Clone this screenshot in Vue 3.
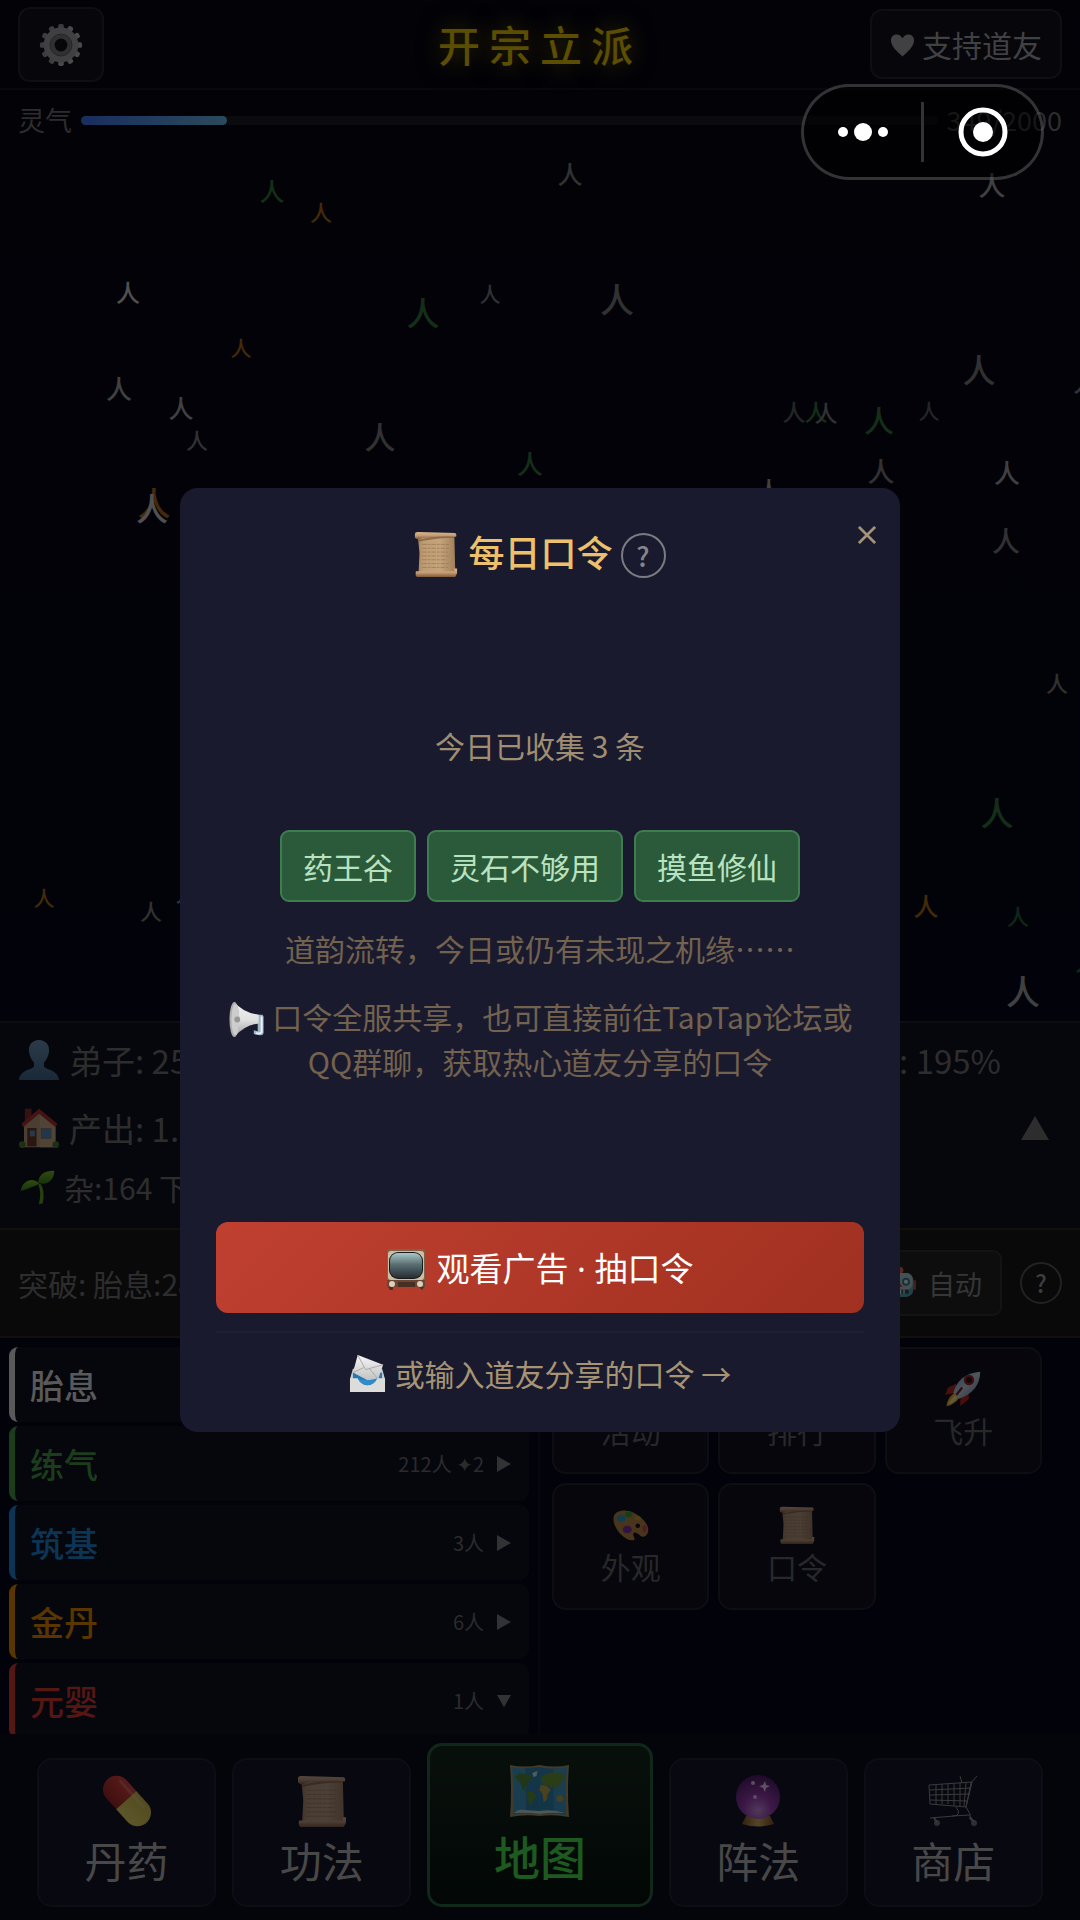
<script setup>
const people = [
  { x: 272, y: 180, s: 25, c: 'green' },
  { x: 321, y: 201, s: 22, c: 'orange' },
  { x: 128, y: 281, s: 24, c: 'white' },
  { x: 490, y: 284, s: 21, c: 'grey' },
  { x: 423, y: 298, s: 33, c: 'green' },
  { x: 241, y: 338, s: 21, c: 'orange' },
  { x: 119, y: 377, s: 26, c: 'silver' },
  { x: 181, y: 397, s: 25, c: 'silver' },
  { x: 197, y: 429, s: 22, c: 'grey' },
  { x: 380, y: 422, s: 31, c: 'grey' },
  { x: 530, y: 452, s: 26, c: 'green' },
  { x: 154, y: 488, s: 33, c: 'orange' },
  { x: 152, y: 493, s: 32, c: 'white' },
  { x: 570, y: 163, s: 25, c: 'grey' },
  { x: 992, y: 173, s: 27, c: 'silver' },
  { x: 617, y: 284, s: 34, c: 'grey' },
  { x: 979, y: 355, s: 33, c: 'grey' },
  { x: 1086, y: 370, s: 26, c: 'grey' },
  { x: 794, y: 401, s: 23, c: 'ash' },
  { x: 816, y: 401, s: 23, c: 'green' },
  { x: 826, y: 402, s: 23, c: 'grey' },
  { x: 879, y: 406, s: 30, c: 'green' },
  { x: 929, y: 401, s: 21, c: 'ash' },
  { x: 881, y: 459, s: 27, c: 'grey' },
  { x: 1007, y: 461, s: 26, c: 'silver' },
  { x: 769, y: 479, s: 26, c: 'silver' },
  { x: 1006, y: 528, s: 28, c: 'grey' },
  { x: 1057, y: 672, s: 22, c: 'grey' },
  { x: 997, y: 798, s: 33, c: 'green' },
  { x: 926, y: 895, s: 25, c: 'orange' },
  { x: 1018, y: 905, s: 22, c: 'teal' },
  { x: 1023, y: 976, s: 34, c: 'silver' },
  { x: 1088, y: 949, s: 26, c: 'teal' },
  { x: 44, y: 888, s: 21, c: 'orange' },
  { x: 151, y: 900, s: 22, c: 'grey' },
  { x: 187, y: 882, s: 23, c: 'grey' }
]
const fieldTop = 150
const place = p => ({
  left: `${p.x / 10.8}%`,
  top: `${p.y - fieldTop - Math.round(p.s * 0.06)}px`,
  fontSize: `${p.s}px`
})

const realms = [
  { name: '胎息', count: '28人', tone: 'white', open: false },
  { name: '练气', count: '212人 ✦2', tone: 'green', open: false },
  { name: '筑基', count: '3人', tone: 'blue', open: false },
  { name: '金丹', count: '6人', tone: 'gold', open: false },
  { name: '元婴', count: '1人', tone: 'red', open: true }
]
const features = [
  { name: '活动', icon: 'scroll' },
  { name: '排行', icon: 'scroll' },
  { name: '飞升', icon: 'rocket' },
  { name: '外观', icon: 'palette' },
  { name: '口令', icon: 'scroll' }
]
const tabs = [
  { name: '丹药', icon: 'pill' },
  { name: '功法', icon: 'scroll' },
  { name: '地图', icon: 'map', active: true },
  { name: '阵法', icon: 'orb' },
  { name: '商店', icon: 'cart' }
]
const codes = ['药王谷', '灵石不够用', '摸鱼修仙']
</script>

<template>
  <svg class="defs" aria-hidden="true">
    <defs>
      <linearGradient id="paper" x1="0" y1="0" x2="1" y2="0">
        <stop offset="0" stop-color="#a5835c" /><stop offset=".15" stop-color="#bf9d74" />
        <stop offset=".6" stop-color="#c4a47c" /><stop offset="1" stop-color="#a17f5a" />
      </linearGradient>
      <linearGradient id="roll" x1="0" y1="0" x2="0" y2="1">
        <stop offset="0" stop-color="#dcb78e" /><stop offset=".5" stop-color="#c49b72" /><stop offset="1" stop-color="#7c5a3a" />
      </linearGradient>
      <linearGradient id="steel" x1="0" y1="0" x2="0" y2="1">
        <stop offset="0" stop-color="#c4c4c4" /><stop offset="1" stop-color="#9a9a9a" />
      </linearGradient>
      <linearGradient id="bust" x1="0" y1="0" x2="0" y2="1">
        <stop offset="0" stop-color="#6d96b4" /><stop offset="1" stop-color="#3c6688" />
      </linearGradient>
      <linearGradient id="leaf" x1="0" y1="0" x2="0" y2="1">
        <stop offset="0" stop-color="#7ac61c" /><stop offset="1" stop-color="#347d0a" />
      </linearGradient>
      <linearGradient id="cone" x1="0" y1="0" x2="0" y2="1">
        <stop offset="0" stop-color="#f0f0f0" /><stop offset=".5" stop-color="#e2e2e2" /><stop offset="1" stop-color="#9c9c9c" />
      </linearGradient>
      <linearGradient id="tube" x1="0" y1="0" x2="0" y2="1">
        <stop offset="0" stop-color="#a9c8c6" /><stop offset=".45" stop-color="#5b7073" /><stop offset="1" stop-color="#252e33" />
      </linearGradient>
      <linearGradient id="letter" x1="0" y1="0" x2="0" y2="1">
        <stop offset="0" stop-color="#f6f6f6" /><stop offset="1" stop-color="#c2c2c2" />
      </linearGradient>
      <radialGradient id="ball" cx=".5" cy=".8" r=".8">
        <stop offset="0" stop-color="#d48fdb" /><stop offset=".4" stop-color="#9a36a8" /><stop offset="1" stop-color="#481058" />
      </radialGradient>
      <linearGradient id="brass" x1="0" y1="0" x2="1" y2="0">
        <stop offset="0" stop-color="#7c4f12" /><stop offset=".5" stop-color="#e0b14a" /><stop offset="1" stop-color="#7c4f12" />
      </linearGradient>
      <linearGradient id="redcap" x1="0" y1="0" x2="0" y2="1">
        <stop offset="0" stop-color="#e8402c" /><stop offset="1" stop-color="#a11c10" />
      </linearGradient>
      <linearGradient id="yellowcap" x1="0" y1="0" x2="0" y2="1">
        <stop offset="0" stop-color="#d8c33a" /><stop offset="1" stop-color="#efe05a" />
      </linearGradient>
      <linearGradient id="hull" x1="0" y1="0" x2="1" y2="1">
        <stop offset="0" stop-color="#5fa4dc" /><stop offset=".5" stop-color="#cfe0ec" /><stop offset="1" stop-color="#70818f" />
      </linearGradient>
    </defs>
    <symbol id="i-scroll" viewBox="0 0 48 48" preserveAspectRatio="none">
      <path d="M4 4h40l1 39H5l1-20z" fill="url(#paper)" />
      <path d="M9 14h29M9 18h30M9 22h28M9 26h30M9 30h27M9 34h30M9 38h28" stroke="#8f6c48" stroke-width="1" stroke-dasharray="5 1 3 1" opacity=".6" />
      <path d="M1 3q0-2 3-2l41 1q2 1 1 4l-36 1q-7 3-9 0z" fill="url(#roll)" />
      <path d="M5 9q18-4 39-3v1q-18 0-39 4z" fill="#6e4c2e" opacity=".6" />
      <path d="M3 42h41v-3h3v5l-2 4H3q-2-2-1-6z" fill="url(#roll)" />
    </symbol>
    <symbol id="i-gear" viewBox="0 0 48 48">
      <g fill="url(#steel)">
        <rect v-for="n in 6" :key="n" x="21" y="1" width="6" height="46" rx="2" :transform="`rotate(${n * 30} 24 24)`" />
      </g>
      <circle cx="24" cy="24" r="15" fill="none" stroke="#a6a6a6" stroke-width="8" />
      <circle cx="24" cy="24" r="12" fill="#7c7c7c" />
      <circle cx="24" cy="24" r="12" fill="none" stroke="#5c5c5c" stroke-width="1" />
      <circle cx="24" cy="24" r="7" fill="#08080c" />
    </symbol>
    <symbol id="i-heart" viewBox="0 0 26 24">
      <path d="M13 24C8 19 1 14 1 7 1 3 4 1 7 1c3 0 5 2 6 4 1-2 3-4 6-4 3 0 6 2 6 6 0 7-7 12-12 17z" fill="currentColor" />
    </symbol>
    <symbol id="i-person" viewBox="0 0 48 48">
      <path d="M24 0c8 0 13 6 12 14-1 6-3 10-6 13v4c0 5 17 4 18 17H0C1 35 18 36 18 31v-4c-3-3-5-7-6-13C11 6 16 0 24 0z" fill="url(#bust)" />
    </symbol>
    <symbol id="i-house" viewBox="0 0 48 48">
      <path d="M7 1h8v12l-8 6z" fill="#8c2418" />
      <path d="M6 20 24 5l19 15v27H6z" fill="#bd9f74" />
      <path d="M25 4 44 20v27H25z" fill="#d0b180" />
      <path d="m3 19 21-18 22 18-2 4L24 7 5 23z" fill="#b42a20" />
      <path d="M10 24h11v22H10z" fill="#6d2e16" /><path d="M13 27h6v7h-6z" fill="#5d96c4" />
      <path d="M26 24h13v13H26z" fill="#8c7760" /><path d="M28 26h10v9H28z" fill="#4e8dc2" />
      <circle cx="4" cy="44" r="4" fill="#4a7a22" /><circle cx="44" cy="44" r="4" fill="#4a7a22" />
    </symbol>
    <symbol id="i-sprout" viewBox="0 0 48 48">
      <path d="M28 19q7 10 3 27l-5 1q4-17-1-27z" fill="#5fa614" />
      <path d="M1 29C3 14 18 9 27 19c-7 3-13 6-26 10z" fill="url(#leaf)" />
      <path d="M25 17C25 5 37 0 47 1c0 13-11 22-22 16z" fill="url(#leaf)" />
    </symbol>
    <symbol id="i-robot" viewBox="0 0 48 48">
      <circle cx="24" cy="5" r="5" fill="#d65f36" />
      <path d="M0 20h48v14H0z" fill="#b73a32" />
      <rect x="4" y="9" width="40" height="36" rx="11" fill="#4b9ba6" />
      <rect x="5" y="9" width="38" height="25" rx="9" fill="#a7c8cc" />
      <circle cx="15" cy="22" r="6" fill="#287586" /><circle cx="33" cy="22" r="6" fill="#287586" />
      <circle cx="15" cy="22" r="3" fill="#e6f1f2" /><circle cx="33" cy="22" r="3" fill="#e6f1f2" />
      <path d="m24 24 4 6h-8z" fill="#c83b30" /><path d="M11 34h26v6H11z" fill="#193e48" />
      <path d="M15 34v6M20 34v6M25 34v6M30 34v6" stroke="#d4e4e5" stroke-width="2" />
    </symbol>
    <symbol id="i-rocket" viewBox="0 0 48 48">
      <path d="M15 17 4 22 0 32l14-3z" fill="#bf2010" /><path d="m31 29 1 8-12 10 1-14z" fill="#bf2010" />
      <path d="M13 29q-10 6-11 18 10-2 18-12z" fill="#ffb52a" /><path d="M14 32Q7 38 5 45q7-3 12-10z" fill="#fff08a" />
      <path d="M11 29C15 14 27 2 47 1 47 19 36 31 19 37z" fill="url(#hull)" />
      <circle cx="32" cy="12" r="7" fill="#a32118" /><circle cx="32" cy="12" r="4" fill="#1a1010" />
      <path d="m23 22-8 10" stroke="#7b1a16" stroke-width="3" />
    </symbol>
    <symbol id="i-palette" viewBox="0 0 48 48">
      <path d="M1 13C3 4 18 2 30 9c12 7 20 18 16 26-2 5-7 6-10 3-3-3-8-6-9-2-1 3 4 6 1 8C17 47-2 28 1 13z" fill="#c08a38" />
      <circle cx="33" cy="25" r="3" fill="#0c0a08" />
      <ellipse cx="11" cy="15" rx="6" ry="5" fill="#279fbe" /><ellipse cx="21" cy="10" rx="5" ry="4" fill="#3a9c24" />
      <ellipse cx="33" cy="15" rx="4" ry="3" fill="#c8a32a" /><ellipse cx="19" cy="30" rx="6" ry="5" fill="#7c2aa4" />
      <ellipse cx="42" cy="29" rx="3" ry="5" fill="#cf4a48" />
    </symbol>
    <symbol id="i-pill" viewBox="0 0 48 48">
      <g transform="rotate(48 24 24)">
        <path d="M24 11H8a13 13 0 0 0 0 26h16z" fill="url(#redcap)" transform="translate(1 0)" />
        <path d="M24 11h16a13 13 0 0 1 0 26H24z" fill="url(#yellowcap)" transform="translate(-1 0)" />
        <path d="M6 16h32" stroke="#fff" stroke-width="3" stroke-linecap="round" opacity=".2" />
      </g>
    </symbol>
    <symbol id="i-map" viewBox="0 0 58 52" preserveAspectRatio="none">
      <path d="M0 0q14 3 29 0 15 3 29 0-2 26 0 52-15-3-29-1-14-2-29 1 2-26 0-52z" fill="#b08a62" />
      <path d="M2 2q13 3 27 0v47q-14-2-26 1 1-24-1-48z" fill="#3d93cc" />
      <path d="M29 2q14 3 27 0-2 24-1 48-13-3-26-1z" fill="#2b7db6" />
      <path d="M15 3l14-1v47l-13-1z" fill="#2269a0" opacity=".6" /><path d="m43 4 13-2q-2 24-1 48l-12-1z" fill="#4fa4da" opacity=".5" />
      <path d="m5 12 4-4 6 1 5 1 2 3-4 4-2 5-2-1 1 4 3 3-6-4-1-5-4-4z" fill="#4f8030" />
      <path d="m18 26 5 1 3 4-3 4-2 5-2 1-1-7-2-4z" fill="#5c8a30" />
      <path d="m22 8 5-2-1 5-3 1z" fill="#d8e4e6" />
      <path d="m30 15 2-4 4-2 8-2 9 2 2 3-4 3-1 4-3 2-2 4-2-4-3 2-2-3-4 1-3-3z" fill="#68912f" />
      <path d="m30 20 6 1 4 4-3 4-1 6-3 2-1-8-3-4z" fill="#c0a040" />
      <path d="m46 31 5-1 2 5-3 2-4-1z" fill="#b99a3e" />
      <path d="M4 48q4-4 10-3l15 1q13-2 25 2-13-1-25 1-13-2-25-1z" fill="#cfdce2" />
    </symbol>
    <symbol id="i-orb" viewBox="0 0 48 52">
      <path d="M12 41h24l4 8q-16 5-32 0z" fill="url(#brass)" />
      <circle cx="24" cy="22" r="22" fill="url(#ball)" />
      <path d="m31 6 1 4 4 1-4 2-1 4-2-4-4-2 4-1z" fill="#f4d5f5" /><circle cx="19" cy="8" r="2" fill="#f0c4f2" /><circle cx="21" cy="22" r="2" fill="#f0c4f2" />
    </symbol>
    <symbol id="i-cart" viewBox="0 0 50 52">
      <g fill="none" stroke="#94918c" stroke-width="1">
        <path d="M1 10 44 7l-6 25-36-3zM2 15l41-2M2 20l40-1M2 25l38 1M8 10v19M14 9v20M20 9v20M26 9v22M32 8v23M38 8l-2 23" />
        <path d="m38 32 5-24 6-7M32 1l2 7M28 32q6 8-2 9L2 43M38 32l4 7v5l4 3M24 41l18-1" />
      </g>
      <circle cx="9" cy="48" r="3" fill="#77716c" /><circle cx="46" cy="48" r="3" fill="#77716c" /><path d="m6 43 3 4M42 42l4 5" stroke="#94918c" stroke-width="2" />
    </symbol>
    <symbol id="i-horn" viewBox="0 0 36 38">
      <path d="M25 14h9l1 2v17q-1 3-5 2l-5-1v-4l4 1V20h-4z" fill="#9fb6c8" /><path d="M33 16v16q-1 2-6 1" fill="none" stroke="#eaf2f7" stroke-width="2" />
      <path d="M5 1q9 11 25 13v9Q15 25 5 37z" fill="url(#cone)" />
      <ellipse cx="5" cy="19" rx="5" ry="18" fill="#adadad" /><ellipse cx="6" cy="19" rx="4" ry="16" fill="#cdcdcd" /><circle cx="8" cy="19" r="3" fill="#999" />
    </symbol>
    <symbol id="i-tv" viewBox="0 0 40 42">
      <rect x="1" y="1" width="38" height="38" rx="3" fill="#80614a" />
      <rect x="2" y="3" width="36" height="29" rx="3" fill="#cdbfa6" />
      <rect x="3" y="4" width="34" height="27" rx="9" fill="#17191a" /><rect x="4" y="5" width="32" height="25" rx="8" fill="url(#tube)" />
      <path d="M1 32h38v7H1z" fill="#6c4632" /><path d="M12 34h17v5H12z" fill="#463026" />
      <circle cx="6" cy="36" r="3" fill="#d9d1bd" /><circle cx="34" cy="36" r="3" fill="#d9d1bd" />
      <path d="M2 39h5v3H4zM33 39h5l-2 3z" fill="#4a2f20" />
    </symbol>
    <symbol id="i-mail" viewBox="0 0 38 38">
      <path d="m4 14h30l3 11H1z" fill="#cfd0d0" /><path d="M4 18h30v14H4z" fill="#2578b4" />
      <path d="M9 0 35 10l-5 15-11 1L4 18z" fill="url(#letter)" /><path d="m9 0 8 15 18-5M4 18l11-5M30 25l-9-11" fill="none" stroke="#a9a9a9" stroke-width="1" />
      <path d="M1 24h8q3 7 10 7t10-7h8v14H1z" fill="#dcdcda" /><path d="M9 24q9 4 20 0-3 7-10 7t-10-7z" fill="#2f8ccc" />
    </symbol>
    <symbol id="i-right" viewBox="0 0 14 16"><path d="M0 0l14 8-14 8z" fill="currentColor" /></symbol>
    <symbol id="i-down" viewBox="0 0 16 14"><path d="M0 0h16L8 14z" fill="currentColor" /></symbol>
    <symbol id="i-up" viewBox="0 0 28 24"><path d="M0 24 14 0l14 24z" fill="currentColor" /></symbol>
  </svg>

  <main class="app">
    <header class="top">
      <button class="gear" aria-label="设置"><svg class="dim"><use href="#i-gear" /></svg></button>
      <h1>开宗立派</h1>
      <button class="support"><svg><use href="#i-heart" /></svg>支持道友</button>
    </header>

    <section class="qi">
      <span>灵气</span>
      <div class="track"><div class="fill"></div></div>
      <span>349/2000</span>
    </section>

    <section class="field">
      <span v-for="(p, i) in people" :key="i" class="person" :class="p.c" :style="place(p)">人</span>
    </section>

    <section class="stats">
      <div class="stat"><svg class="dim"><use href="#i-person" /></svg><span>弟子: 250</span><span class="rate">效率: 195%</span></div>
      <div class="stat"><svg class="dim"><use href="#i-house" /></svg><span>产出: 1.2</span><button class="fold" aria-label="收起"><svg><use href="#i-up" /></svg></button></div>
      <div class="stat small"><svg class="dim"><use href="#i-sprout" /></svg><span>杂:164 下</span></div>
    </section>

    <section class="break">
      <span class="progress">突破: 胎息:28</span>
      <button class="auto"><svg class="dim"><use href="#i-robot" /></svg>自动</button>
      <button class="help" aria-label="突破说明">?</button>
    </section>

    <section class="columns">
      <ul class="realms">
        <li v-for="r in realms" :key="r.name" :class="'t-' + r.tone">
          <strong>{{ r.name }}</strong>
          <span>{{ r.count }}</span>
          <svg><use :href="r.open ? '#i-down' : '#i-right'" /></svg>
        </li>
      </ul>
      <div class="features">
        <button v-for="f in features" :key="f.name"><svg class="dim"><use :href="'#i-' + f.icon" /></svg>{{ f.name }}</button>
      </div>
    </section>

    <nav class="tabs">
      <button v-for="t in tabs" :key="t.name" :class="{ active: t.active }"><svg class="dim"><use :href="'#i-' + t.icon" /></svg>{{ t.name }}</button>
    </nav>

    <div class="overlay">
      <section class="modal" role="dialog" aria-labelledby="modal-title">
        <button class="close" aria-label="关闭"><svg viewBox="0 0 20 20"><path d="M1 1l18 18M19 1 1 19" stroke="currentColor" stroke-width="3" /></svg></button>
        <div class="heading">
          <svg><use href="#i-scroll" /></svg>
          <h2 id="modal-title">每日口令</h2>
          <button class="help bright" aria-label="口令说明">?</button>
        </div>
        <div class="body">
          <p class="count">今日已收集 3 条</p>
          <ul class="codes"><li v-for="c in codes" :key="c">{{ c }}</li></ul>
          <p class="hint">道韵流转，今日或仍有未现之机缘……</p>
          <p class="hint"><svg><use href="#i-horn" /></svg> 口令全服共享，也可直接前往TapTap论坛或QQ群聊，获取热心道友分享的口令</p>
        </div>
        <button class="watch"><svg><use href="#i-tv" /></svg><span>观看广告<span class="mid"> · </span>抽口令</span></button>
        <a class="enter" href="#"><svg><use href="#i-mail" /></svg>或输入道友分享的口令 →</a>
      </section>
    </div>

    <div class="capsule">
      <button aria-label="更多"><svg viewBox="0 0 50 20" class="dots"><circle cx="5" cy="10" r="5" /><circle cx="25" cy="10" r="9" /><circle cx="45" cy="10" r="5" /></svg></button>
      <i></i>
      <button aria-label="退出"><svg viewBox="0 0 50 50" class="ring"><circle cx="25" cy="25" r="22" fill="none" stroke="#fff" stroke-width="5" /><circle cx="25" cy="25" r="10" /></svg></button>
    </div>
  </main>
</template>

<style>
html, body { background: #020207; }
</style>

<style scoped>
.defs { position: absolute; width: 0; height: 0; }
* { box-sizing: border-box; }
.app {
  position: relative;
  display: flex;
  flex-direction: column;
  min-height: 100vh;
  overflow: hidden;
  color: #2d2d2e;
  background: linear-gradient(#020207, #02030a 50%, #03030c 85%, #05050e);
  font-family: "Noto Sans CJK SC", "DejaVu Sans", sans-serif;
}
button { display: flex; align-items: center; justify-content: center; margin: 0; padding: 0; border: 0; background: none; color: inherit; font: inherit; }
h1, h2, p, ul { margin: 0; padding: 0; list-style: none; }
svg { flex: none; }
.dim { opacity: .36; }

.top { display: grid; grid-template-columns: 1fr auto 1fr; align-items: center; height: 90px; padding: 0 18px; border-bottom: 2px solid #08080d; }
.gear { width: 86px; height: 75px; border: 2px solid #0e0e13; border-radius: 12px; background: #06060b; }
.gear svg { width: 44px; height: 44px; margin-top: 2px; }
h1 { color: #5b4d02; font-size: 42px; font-weight: 500; line-height: 60px; letter-spacing: 9px; text-shadow: 0 0 24px #3a3004; }
.support { justify-self: end; gap: 7px; height: 70px; padding: 0 18px; border: 2px solid #0e0e13; border-radius: 12px; background: #06060b; color: #414143; font-size: 30px; line-height: 45px; }
.support svg { width: 25px; height: 24px; margin-top: 2px; }

.qi { display: flex; align-items: center; gap: 9px; height: 60px; padding: 0 18px; font-size: 27px; line-height: 40px; }
.track { flex: 1; height: 9px; border-radius: 5px; background: #0a0a0f; }
.fill { width: 17%; height: 100%; border-radius: 5px; background: linear-gradient(90deg, #182e5e, #2b4a5c); }

.field { position: relative; flex: 1; min-height: 600px; }
.person { position: absolute; font-weight: 500; line-height: 1; transform: translateX(-50%); }
.white { color: #505050; }
.silver { color: #404041; }
.grey { color: #313132; }
.ash { color: #252527; }
.green { color: #142e18; }
.teal { color: #0f261a; }
.orange { color: #442a08; }

.stats { display: flex; flex-direction: column; padding: 12px 18px 20px; border-top: 2px solid #0c0c11; background: #06070c; }
.stat { display: flex; align-items: center; gap: 10px; height: 50px; margin-bottom: 18px; padding-left: 1px; font-size: 33px; }
.stat > svg { width: 40px; height: 40px; }
.stat.small { height: 42px; margin: -5px 0 0; gap: 8px; font-size: 30px; }
.stat.small > svg { width: 37px; height: 35px; }
.rate { margin-left: auto; padding-right: 61px; }
.fold { margin-left: auto; padding-right: 13px; }
.fold svg { width: 28px; height: 24px; }

.break { display: flex; align-items: center; gap: 18px; height: 110px; padding: 0 18px; border-top: 2px solid #13100c; border-bottom: 2px solid #13100c; background: #09090a; font-size: 30px; }
.progress { flex: 1; }
.auto { gap: 12px; height: 66px; padding: 0 18px; border: 2px solid #131314; border-radius: 9px; background: #0d0d0e; color: #363636; font-size: 27px; }
.auto svg { width: 32px; height: 32px; }
.help { width: 42px; height: 42px; border: 2px solid #222; border-radius: 50%; color: #3d3d3d; font-size: 24px; font-weight: 500; line-height: 36px; }

.columns { display: grid; grid-template-columns: 1fr 1fr; height: 396px; overflow: hidden; background: #02020a; }
.realms { display: flex; flex-direction: column; gap: 4px; min-width: 0; padding: 9px; border-right: 2px solid #06060d; }
.realms li { display: flex; flex: none; align-items: center; height: 75px; padding: 0 18px 0 15px; border-left: 6px solid currentColor; border-radius: 9px; background: #06060d; }
.realms strong { flex: 1; font-size: 34px; font-weight: 500; }
.realms span { margin-right: 13px; color: #2b2b2d; font-size: 20px; }
.realms svg { width: 14px; height: 16px; color: #323234; }
.t-white { color: #595959; }
.t-green { color: #1b3d1c; }
.t-blue { color: #0c3555; }
.t-gold { color: #593500; }
.t-red { color: #551713; }
.features { display: grid; grid-template-columns: repeat(3, 1fr); align-content: start; gap: 9px; min-width: 0; padding: 9px 38px 9px 12px; }
.features button { flex-direction: column; height: 127px; padding-top: 2px; border: 2px solid #0d0d12; border-radius: 14px; background: #06060c; color: #28282a; font-size: 30px; line-height: 45px; }
.features svg { width: 36px; height: 38px; }

.tabs { display: flex; align-items: flex-end; gap: 16px; padding: 9px 37px 13px; background: #04040b; }
.tabs button { flex: 4; flex-direction: column; height: 149px; border: 2px solid #0d0d15; border-radius: 15px; background: #080810; color: #484848; font-size: 42px; line-height: 60px; }
.tabs svg { width: 50px; height: 52px; margin-bottom: 3px; }
.tabs button.active { flex: 5; height: 164px; border: 3px solid #10281a; background: linear-gradient(#08100c, #020705); color: #1d5a20; font-size: 46px; font-weight: 500; }
.tabs .active svg { width: 59px; margin-bottom: 8px; }

.overlay { position: absolute; inset: 0; display: flex; align-items: center; justify-content: center; }
.modal { position: relative; width: 66.667%; padding: 36px; border-radius: 18px; background: #1a1a2e; font-size: 30px; line-height: 45px; text-align: center; }
.close { position: absolute; top: 29px; right: 15px; width: 36px; height: 36px; color: #a39379; }
.close svg { width: 18px; height: 18px; }
.heading { display: flex; align-items: center; justify-content: center; height: 54px; }
.heading > svg { width: 44px; height: 46px; margin: 5px 10px 0 0; }
h2 { color: #edc06b; font-size: 36px; font-weight: 500; line-height: 54px; }
.bright { width: 45px; height: 45px; margin: 9px 0 0 8px; border-color: #7b7b83; color: #85858c; font-size: 27px; }
.body { padding: 145px 0 138px; }
.count { color: #a08e72; }
.codes { display: flex; justify-content: center; gap: 11px; margin: 62px 0 24px; }
.codes li { height: 72px; padding: 12px 21px; border: 2px solid #3f7d51; border-radius: 9px; background: #2a5a3a; color: #b9e3c0; }
.hint { color: #72624f; }
.hint + .hint { margin-top: 23px; }
.hint svg { width: 38px; height: 37px; vertical-align: -9px; }
.watch { gap: 10px; width: 100%; height: 91px; border-radius: 12px; background: linear-gradient(135deg, #c04030, #a03020); color: #fff; font-size: 33px; }
.watch svg { width: 40px; height: 42px; margin-top: 3px; }
.mid { font-family: "Noto Sans", sans-serif; white-space: pre; }
.enter { display: flex; align-items: center; justify-content: center; gap: 9px; margin-top: 18px; padding-top: 18px; border-top: 2px solid #241f30; color: #a69474; text-decoration: none; }
.enter svg { width: 37px; height: 37px; }

.capsule { position: absolute; top: 84px; right: 36px; display: flex; align-items: center; width: 243px; height: 96px; border: 3px solid rgba(255, 255, 255, .2); border-radius: 48px; background: rgba(0, 0, 0, .5); }
.capsule button { flex: 1; }
.capsule i { width: 3px; height: 60px; background: #333; }
.capsule svg { fill: #fff; }
.dots { width: 50px; height: 20px; }
.ring { width: 50px; height: 50px; }
</style>
